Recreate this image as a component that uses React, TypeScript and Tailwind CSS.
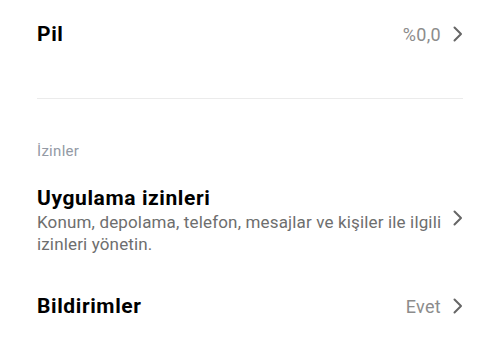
function Chevron({ className = '' }: { className?: string }) {
  return (
    <svg width="10" height="16" viewBox="0 0 10 16" fill="none" className={`shrink-0 text-[#666] ${className}`}>
      <polyline points="1.5,1.5 8,8 1.5,14.5" stroke="currentColor" strokeWidth="2" strokeLinecap="round" strokeLinejoin="round" />
    </svg>
  );
}

function SettingRow({ title, value }: { title: string; value?: string }) {
  return (
    <div className="flex h-[28px] items-center justify-between">
      <span className="text-[21px] font-bold leading-[28px] tracking-[0.6px] text-black">{title}</span>
      <div className="flex items-center gap-[12px]">
        {value && <span className="text-[18px] tracking-[0.3px] text-[#8c8c8c]">{value}</span>}
        <Chevron />
      </div>
    </div>
  );
}

export default function App() {
  return (
    <div className="h-[340px] w-[500px] bg-white px-[37px] font-['Roboto',sans-serif]">
      <div className="pt-[20px]">
        <SettingRow title="Pil" value="%0,0" />
      </div>
      <div className="mt-[50px] h-px bg-[#ebebeb]" />
      <div className="mt-[42px] text-[15px] leading-[20px] tracking-[0.3px] text-[#939aa5]">İzinler</div>
      <div className="mt-[24px] flex items-center justify-between gap-2">
        <div>
          <div className="text-[21px] font-bold leading-[26px] tracking-[0.6px] text-black">Uygulama izinleri</div>
          <div className="text-[17px] leading-[22px] tracking-[0.15px] text-[#6e6e6e]">
            Konum, depolama, telefon, mesajlar ve kişiler ile ilgili izinleri yönetin.
          </div>
        </div>
        <Chevron className="-mt-[4px]" />
      </div>
      <div className="mt-[37px]">
        <SettingRow title="Bildirimler" value="Evet" />
      </div>
    </div>
  );
}
